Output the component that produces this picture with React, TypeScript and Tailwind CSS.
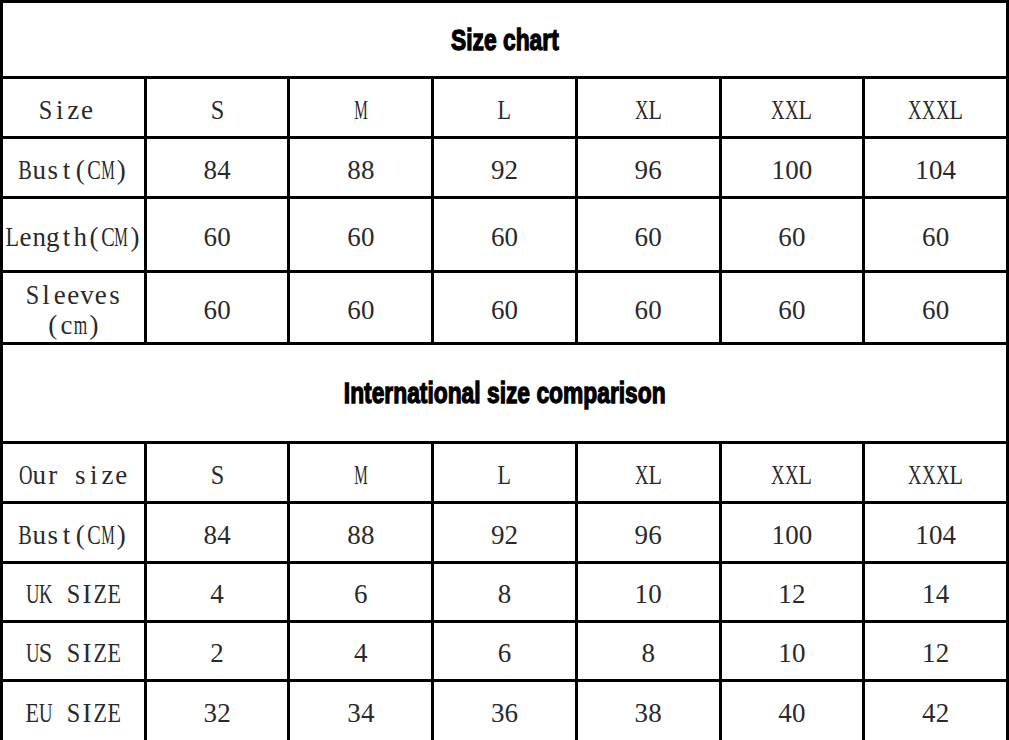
import type { ReactNode } from "react";

// advance widths of Times-like glyphs, in em
const ADV: Record<string, number> = {
  B: 0.667, C: 0.667, E: 0.611, I: 0.333, K: 0.722, L: 0.611, M: 0.889, O: 0.722,
  S: 0.556, U: 0.722, X: 0.722, Z: 0.611,
  a: 0.444, c: 0.444, e: 0.444, g: 0.5, h: 0.5, i: 0.278, l: 0.278, m: 0.778,
  n: 0.5, o: 0.5, r: 0.333, s: 0.389, t: 0.278, u: 0.5, v: 0.5, z: 0.444,
};

function Mono({ text }: { text: string }) {
  return (
    <span className="inline-flex">
      {[...text].map((ch, i) => {
        const w = ADV[ch] ?? 0.5;
        const scale = Math.min(1, 0.5 / w);
        return (
          <span key={i} className="inline-flex w-[13.7px] justify-center">
            {ch === " " ? (
              "\u00a0"
            ) : (
              <span className="inline-block" style={{ transform: `scaleX(${scale})` }}>
                {ch}
              </span>
            )}
          </span>
        );
      })}
    </span>
  );
}

function Cell({ children }: { children: ReactNode }) {
  return (
    <div className="flex items-center justify-center bg-white pt-[4px] text-[27px] leading-[30px] text-[#2a2a2a]">
      {children}
    </div>
  );
}

function Heading({ title }: { title: string }) {
  return (
    <div className="col-span-7 flex items-center justify-center bg-white">
      <span className="inline-block scale-x-[0.76] font-['Liberation_Sans',Arial,sans-serif] text-[30px] font-bold leading-none text-black [-webkit-text-stroke:1.3px_#000]">
        {title}
      </span>
    </div>
  );
}

function Row({ label, values }: { label: ReactNode; values: string[] }) {
  return (
    <>
      <Cell>{label}</Cell>
      {values.map((v, i) => (
        <Cell key={i}>
          <Mono text={v} />
        </Cell>
      ))}
    </>
  );
}

const sizes = ["S", "M", "L", "XL", "XXL", "XXXL"];
const bust = ["84", "88", "92", "96", "100", "104"];
const sixty = ["60", "60", "60", "60", "60", "60"];

export default function App() {
  return (
    <div className="grid h-[740px] w-[1009px] grid-cols-7 grid-rows-[73px_57px_57px_71px_69px_96px_57px_57px_56px_56px_58px] gap-[3px] bg-black p-[3px] pb-0 font-['Liberation_Serif','Times_New_Roman',serif]">
      <Heading title="Size chart" />
      <Row label={<Mono text="Size " />} values={sizes} />
      <Row label={<Mono text="Bust(CM)" />} values={bust} />
      <Row label={<Mono text="Length(CM)" />} values={sixty} />
      <Row
        label={
          <span className="flex flex-col items-center">
            <Mono text="Sleeves" />
            <Mono text="(cm)" />
          </span>
        }
        values={sixty}
      />
      <Heading title="International size comparison" />
      <Row label={<Mono text="Our size" />} values={sizes} />
      <Row label={<Mono text="Bust(CM)" />} values={bust} />
      <Row label={<Mono text="UK SIZE" />} values={["4", "6", "8", "10", "12", "14"]} />
      <Row label={<Mono text="US SIZE" />} values={["2", "4", "6", "8", "10", "12"]} />
      <Row label={<Mono text="EU SIZE" />} values={["32", "34", "36", "38", "40", "42"]} />
    </div>
  );
}
